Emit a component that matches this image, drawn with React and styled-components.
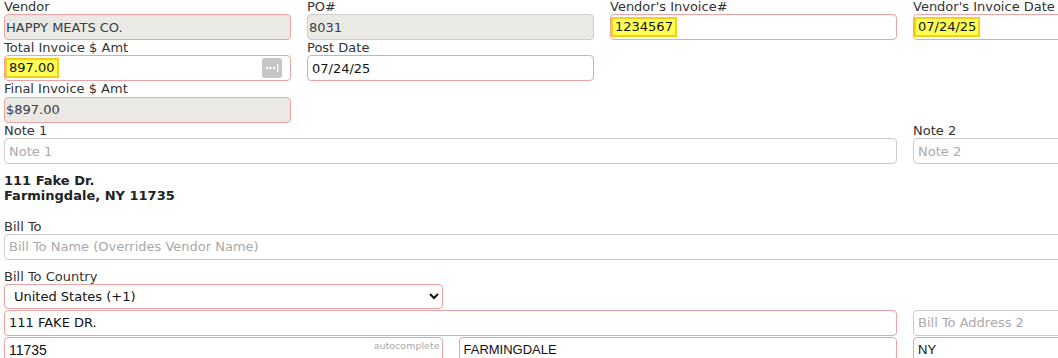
import React from "react";
import styled, { createGlobalStyle } from "styled-components";

const GlobalStyle = createGlobalStyle`
  html, body {
    margin: 0;
    padding: 0;
    overflow: hidden;
    background: #fff;
  }
`;

const PINK = "#eba3a3";
const GRAY = "#cccccc";
const READONLY_BG = "#ebe9e3";

const Page = styled.div`
  width: 1196px;
  margin: -1.4px 0 0 4px;
  font-family: "DejaVu Sans", Verdana, sans-serif;
  font-size: 13px;
  color: #333;
`;

const Grid = styled.div`
  display: grid;
  grid-template-columns: repeat(4, 287px);
  column-gap: 16px;
  align-items: start;
  margin-top: ${(p) => p.$top || 0}px;
`;

const Cell = styled.div`
  grid-column: span ${(p) => p.$span || 1};
  display: flex;
  flex-direction: column;
  min-width: 0;
`;

const Half = styled.div`
  display: grid;
  grid-template-columns: 1fr 1fr;
  column-gap: 16px;
  width: 893px;
`;

const Label = styled.label`
  display: block;
  line-height: 15.4px;
  color: #333;
  white-space: nowrap;
`;

const Input = styled.input`
  box-sizing: border-box;
  width: 100%;
  height: 26px;
  margin: 0;
  border: 1px solid ${(p) => (p.$gray ? GRAY : PINK)};
  border-radius: 4px;
  background: ${(p) => (p.readOnly ? READONLY_BG : "#fff")};
  padding: ${(p) => (p.readOnly ? "0 1px" : "0 4px")};
  font-family: ${(p) => (p.$arial ? '"Liberation Sans", Arial, sans-serif' : '"DejaVu Sans", Verdana, sans-serif')};
  font-size: ${(p) => p.$size || 13}px;
  color: ${(p) => (p.readOnly ? "#34404e" : "#111")};
  outline: none;

  &::placeholder {
    color: #a9a9a9;
  }
`;

const FieldBox = styled.div`
  box-sizing: border-box;
  width: 100%;
  height: 26px;
  border: 1px solid ${PINK};
  border-radius: 4px;
  background: #fff;
  display: flex;
  align-items: center;
  justify-content: space-between;
  padding: 0 8px 0 0;
`;

const Mark = styled.span`
  background: #ffff55;
  border: 2px solid #f6cf18;
  padding: 0 2px;
  line-height: 16px;
  color: #111;
`;

const MoreButton = styled.button`
  width: 20px;
  height: 20px;
  padding: 0;
  border: none;
  border-radius: 3px;
  background: #c6c6c6;
  display: flex;
  align-items: center;
  justify-content: center;
`;

const Address = styled.div`
  margin-top: 9px;
  font-weight: bold;
  line-height: 15px;
  color: #222;
`;

const Block = styled.div`
  margin-top: ${(p) => p.$top || 0}px;
`;

const Select = styled.select`
  box-sizing: border-box;
  width: 100%;
  height: 25px;
  margin: 0;
  border: 1px solid ${PINK};
  border-radius: 4px;
  background: #fff;
  padding: 0 4px 0 5px;
  font-family: "DejaVu Sans", Verdana, sans-serif;
  font-size: 13px;
  color: #111;
  outline: none;
`;

const ZipWrap = styled.div`
  position: relative;
`;

const Hint = styled.span`
  position: absolute;
  top: 3px;
  right: 3px;
  font-size: 9.5px;
  line-height: 11px;
  color: #aaa;
`;

const DotsIcon = () => (
  <svg width="14" height="8" viewBox="0 0 14 8">
    <circle cx="2" cy="4" r="1.2" fill="#fff" />
    <circle cx="5.5" cy="4" r="1.2" fill="#fff" />
    <circle cx="9" cy="4" r="1.2" fill="#fff" />
    <rect x="12" y="0" width="1.3" height="8" fill="#fff" />
  </svg>
);

const App = () => {
  return (
    <>
      <GlobalStyle />
      <Page>
        <Grid>
          <Cell>
            <Label>Vendor</Label>
            <Input readOnly value="HAPPY MEATS CO." />
            <Label>Total Invoice $ Amt</Label>
            <FieldBox>
              <Mark>897.00</Mark>
              <MoreButton type="button">
                <DotsIcon />
              </MoreButton>
            </FieldBox>
            <Label>Final Invoice $ Amt</Label>
            <Input readOnly value="$897.00" />
          </Cell>
          <Cell>
            <Label>PO#</Label>
            <Input readOnly $gray value="8031" />
            <Label>Post Date</Label>
            <Input defaultValue="07/24/25" />
          </Cell>
          <Cell>
            <Label>Vendor's Invoice#</Label>
            <FieldBox>
              <Mark>1234567</Mark>
            </FieldBox>
          </Cell>
          <Cell>
            <Label>Vendor's Invoice Date</Label>
            <FieldBox>
              <Mark>07/24/25</Mark>
            </FieldBox>
          </Cell>
        </Grid>

        <Grid>
          <Cell $span={3}>
            <Label>Note 1</Label>
            <Input $gray placeholder="Note 1" />
          </Cell>
          <Cell>
            <Label>Note 2</Label>
            <Input $gray placeholder="Note 2" />
          </Cell>
        </Grid>

        <Address>
          111 Fake Dr.
          <br />
          Farmingdale, NY 11735
        </Address>

        <Block $top={15.3}>
          <Label>Bill To</Label>
          <Input $gray placeholder="Bill To Name (Overrides Vendor Name)" />
        </Block>

        <Block $top={8.6}>
          <Label>Bill To Country</Label>
          <Half>
            <Select defaultValue="us">
              <option value="us">United States (+1)</option>
              <option value="ca">Canada (+1)</option>
            </Select>
          </Half>
        </Block>

        <Grid $top={0.6}>
          <Cell $span={3}>
            <Input defaultValue="111 FAKE DR." />
          </Cell>
          <Cell>
            <Input $gray placeholder="Bill To Address 2" />
          </Cell>
        </Grid>

        <Grid $top={1}>
          <Cell $span={3}>
            <Half>
              <ZipWrap>
                <Input $arial $size={14} defaultValue="11735" />
                <Hint>autocomplete</Hint>
              </ZipWrap>
              <Input $arial defaultValue="FARMINGDALE" />
            </Half>
          </Cell>
          <Cell>
            <Input $arial defaultValue="NY" />
          </Cell>
        </Grid>
      </Page>
    </>
  );
};

export default App;
